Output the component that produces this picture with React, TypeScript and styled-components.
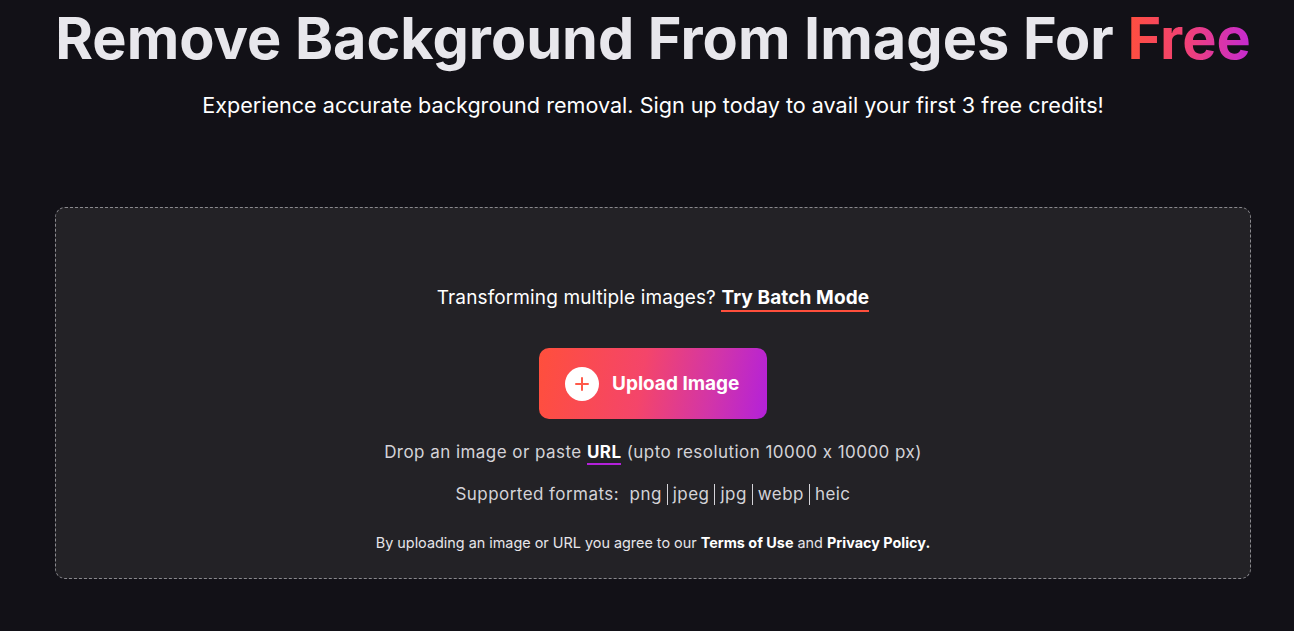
import React from "react";
import styled, { createGlobalStyle } from "styled-components";

const GlobalStyle = createGlobalStyle`
  html, body {
    margin: 0;
    padding: 0;
    background: #121117;
    font-family: Inter, "Noto Sans", sans-serif;
    color: #fff;
  }
`;

const Page = styled.main`
  display: flex;
  flex-direction: column;
  align-items: center;
  padding: 0 43px 0 55px;
`;

const Title = styled.h1`
  margin: 1px 0 0;
  font-size: 57.6px;
  line-height: 74px;
  font-weight: 700;
  color: #e8e7ec;
  text-align: center;
`;

const Gradient = styled.span`
  background: linear-gradient(90deg, #ff4f3c 0%, #f0407a 50%, #c42ad2 100%);
  -webkit-background-clip: text;
  background-clip: text;
  color: transparent;
`;

const Subtitle = styled.p`
  margin: 16px 0 0;
  font-size: 21.6px;
  line-height: 28px;
  text-align: center;
  color: #fff;
`;

const Dropzone = styled.section`
  margin-top: 88px;
  width: 100%;
  box-sizing: border-box;
  height: 372px;
  background: #232226;
  border: 1px dashed #8a898e;
  border-radius: 10px;
  display: flex;
  flex-direction: column;
  align-items: center;
  padding-top: 77px;
`;

const Batch = styled.p`
  margin: 0;
  font-size: 19px;
  line-height: 26px;
  letter-spacing: 0.12px;
  color: #fff;
`;

const Link = styled.a<{ $line: string }>`
  color: #fff;
  font-weight: 700;
  text-decoration: none;
  border-bottom: 2px solid ${(p) => p.$line};
  padding-bottom: 1px;
`;

const UploadButton = styled.button`
  margin-top: 37px;
  width: 228px;
  height: 71px;
  border: none;
  border-radius: 10px;
  background: linear-gradient(100deg, #ff4f3c 0%, #f4456a 45%, #d235a8 75%, #b321da 100%);
  display: flex;
  align-items: center;
  gap: 13px;
  padding: 0 0 0 26px;
  font-family: inherit;
  font-size: 19px;
  font-weight: 700;
  color: #fff;
  cursor: pointer;
`;

const PlusCircle = styled.span`
  width: 34px;
  height: 34px;
  border-radius: 50%;
  background: #fff;
  display: flex;
  align-items: center;
  justify-content: center;
`;

const Info = styled.p<{ $top: number }>`
  margin: ${(p) => p.$top}px 0 0;
  font-size: 17px;
  line-height: 24px;
  color: #d4d3d8;
  letter-spacing: 0.45px;
`;

const Pipe = styled.span`
  display: inline-block;
  width: 1px;
  height: 21px;
  background: #d4d3d8;
  margin: 0 5px;
  vertical-align: -5px;
`;

const Legal = styled.p`
  margin: 27px 0 0;
  font-size: 14.4px;
  line-height: 20px;
  color: #e6e5ea;

  b {
    color: #fff;
    font-weight: 700;
  }
`;

const formats = ["png", "jpeg", "jpg", "webp", "heic"];

const App = () => {
  return (
    <Page>
      <GlobalStyle />
      <Title>
        Remove Background From Images For <Gradient>Free</Gradient>
      </Title>
      <Subtitle>
        Experience accurate background removal. Sign up today to avail your first 3 free credits!
      </Subtitle>
      <Dropzone>
        <Batch>
          Transforming multiple images? <Link href="#" $line="#ff4f3c">Try Batch Mode</Link>
        </Batch>
        <UploadButton>
          <PlusCircle>
            <svg width="14" height="14" viewBox="0 0 14 14">
              <path d="M7 1v12M1 7h12" stroke="#ff5a4a" strokeWidth="2" strokeLinecap="round" />
            </svg>
          </PlusCircle>
          Upload Image
        </UploadButton>
        <Info $top={21}>
          Drop an image or paste <Link href="#" $line="#b321da">URL</Link> (upto resolution 10000 x 10000 px)
        </Info>
        <Info $top={18}>
          Supported formats:&nbsp;{" "}
          {formats.map((f, i) => (
            <React.Fragment key={f}>
              {i > 0 && <Pipe />}
              {f}
            </React.Fragment>
          ))}
        </Info>
        <Legal>
          By uploading an image or URL you agree to our <b>Terms of Use</b> and <b>Privacy Policy.</b>
        </Legal>
      </Dropzone>
    </Page>
  );
};

export default App;
